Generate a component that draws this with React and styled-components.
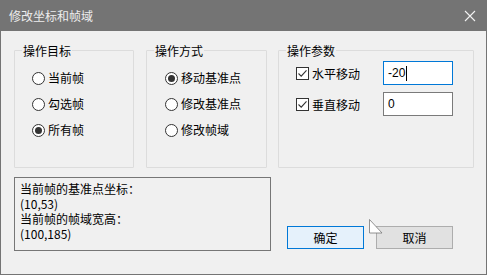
import React from "react";
import styled, { createGlobalStyle } from "styled-components";

const GlobalStyle = createGlobalStyle`
  html, body {
    margin: 0;
    padding: 0;
    background: #f0f0f0;
  }
  body {
    font-family: "Noto Sans CJK SC", "Liberation Sans", sans-serif;
    font-size: 12px;
    color: #000;
  }
`;

const Window = styled.div`
  position: relative;
  width: 487px;
  height: 275px;
  box-sizing: border-box;
  border: 1px solid #747474;
  border-top: none;
  background: #f0f0f0;
  display: flex;
  flex-direction: column;
`;

const TitleBar = styled.div`
  height: 31px;
  margin: 0 -1px;
  background: #747474;
  display: flex;
  align-items: center;
  justify-content: space-between;
  padding: 0 10px 0 9px;
  color: #ededed;
  font-size: 12px;
`;

const CloseBtn = styled.div`
  width: 12px;
  height: 12px;
  margin-right: 1px;
  display: flex;
`;

const Body = styled.div`
  flex: 1;
  display: flex;
  flex-direction: column;
  padding: 19px 12px 0 13px;
`;

const GroupRow = styled.div`
  display: flex;
  height: 118px;
`;

const Group = styled.div`
  position: relative;
  box-sizing: border-box;
  width: ${(p) => p.$w}px;
  margin-right: ${(p) => p.$gap || 0}px;
  border: 1px solid #dcdcdc;
  border-radius: 1px;
  padding: ${(p) => p.$pad || "20px 0 0 17px"};
  display: flex;
  flex-direction: column;
`;

const Legend = styled.div`
  position: absolute;
  top: -8px;
  left: 7px;
  padding: 0 1px;
  background: #f0f0f0;
  line-height: 15px;
  font-size: 12px;
`;

const Option = styled.div`
  display: flex;
  align-items: center;
  height: 14px;
  margin-bottom: 12px;
  line-height: 14px;
`;

const RadioDot = styled.span`
  box-sizing: border-box;
  width: 13px;
  height: 13px;
  border: 1px solid #333;
  border-radius: 50%;
  background: #fff;
  margin-right: 3px;
  display: flex;
  align-items: center;
  justify-content: center;
  &::after {
    content: "";
    display: ${(p) => (p.$on ? "block" : "none")};
    width: 7px;
    height: 7px;
    border-radius: 50%;
    background: #333;
  }
`;

const ParamRow = styled.div`
  display: flex;
  align-items: center;
  height: 24px;
  margin-bottom: ${(p) => p.$mb || 0}px;
`;

const CheckLabel = styled.div`
  display: flex;
  align-items: center;
  width: 87px;
`;

const CheckBox = styled.span`
  box-sizing: border-box;
  width: 13px;
  height: 13px;
  border: 1px solid #333;
  background: #fff;
  margin-right: 3px;
  display: flex;
`;

const TextInput = styled.div`
  box-sizing: border-box;
  width: 70px;
  height: 24px;
  border: 1px solid ${(p) => (p.$focus ? "#0078d7" : "#7a7a7a")};
  background: #fff;
  padding: 0 0 0 4px;
  display: flex;
  align-items: center;
  font-family: "Liberation Sans", "Noto Sans", sans-serif;
  font-size: 12px;
`;

const Caret = styled.span`
  display: inline-block;
  width: 1px;
  height: 15px;
  background: #000;
  margin-left: 1px;
`;

const LowerRow = styled.div`
  display: flex;
  margin-top: 9px;
`;

const InfoBox = styled.div`
  box-sizing: border-box;
  width: 257px;
  height: 74px;
  border: 1px solid #767676;
  padding: 3px 0 0 5px;
  line-height: 15px;
  font-size: 12px;
`;

const Buttons = styled.div`
  display: flex;
  gap: 12px;
  margin: 49px 0 0 16px;
`;

const Button = styled.div`
  box-sizing: border-box;
  width: 77px;
  height: 23px;
  display: flex;
  align-items: center;
  justify-content: center;
  border: 1px solid ${(p) => (p.$primary ? "#0078d7" : "#adadad")};
  background: ${(p) => (p.$primary ? "#e5f1fb" : "#e1e1e1")};
  font-size: 12px;
`;

const Cursor = styled.svg`
  position: absolute;
  left: 368px;
  top: 219px;
`;

const Radio = ({ on, children }) => (
  <Option>
    <RadioDot $on={on} />
    {children}
  </Option>
);

const Check = () => (
  <CheckBox>
    <svg width="11" height="11" viewBox="0 0 11 11">
      <path d="M1.5 5.5 L4.2 8.2 L9.5 2.3" fill="none" stroke="#333" strokeWidth="1.1" />
    </svg>
  </CheckBox>
);

export default function App() {
  return (
    <>
      <GlobalStyle />
      <Window>
        <TitleBar>
          <span>修改坐标和帧域</span>
          <CloseBtn>
            <svg width="12" height="12" viewBox="0 0 12 12">
              <path d="M1 1 L11 11 M11 1 L1 11" stroke="#f2f2f2" strokeWidth="1.1" />
            </svg>
          </CloseBtn>
        </TitleBar>
        <Body>
          <GroupRow>
            <Group $w={120} $gap={12}>
              <Legend>操作目标</Legend>
              <Radio>当前帧</Radio>
              <Radio>勾选帧</Radio>
              <Radio on>所有帧</Radio>
            </Group>
            <Group $w={121} $gap={11} $pad="20px 0 0 18px">
              <Legend>操作方式</Legend>
              <Radio on>移动基准点</Radio>
              <Radio>修改基准点</Radio>
              <Radio>修改帧域</Radio>
            </Group>
            <Group $w={196} $pad="10px 0 0 17px">
              <Legend>操作参数</Legend>
              <ParamRow $mb={7}>
                <CheckLabel>
                  <Check />
                  水平移动
                </CheckLabel>
                <TextInput $focus>
                  -20
                  <Caret />
                </TextInput>
              </ParamRow>
              <ParamRow>
                <CheckLabel>
                  <Check />
                  垂直移动
                </CheckLabel>
                <TextInput>0</TextInput>
              </ParamRow>
            </Group>
          </GroupRow>
          <LowerRow>
            <InfoBox>
              当前帧的基准点坐标：
              <br />
              (10,53)
              <br />
              当前帧的帧域宽高：
              <br />
              (100,185)
            </InfoBox>
            <Buttons>
              <Button $primary>确定</Button>
              <Button>取消</Button>
            </Buttons>
          </LowerRow>
        </Body>
        <Cursor width="14" height="16" viewBox="0 0 14 16">
          <path d="M0.5 0.5 L0.5 14 L5 14 L13 14 L0.5 0.5 Z" fill="#fff" stroke="#777" strokeWidth="0.8" />
        </Cursor>
      </Window>
    </>
  );
}
